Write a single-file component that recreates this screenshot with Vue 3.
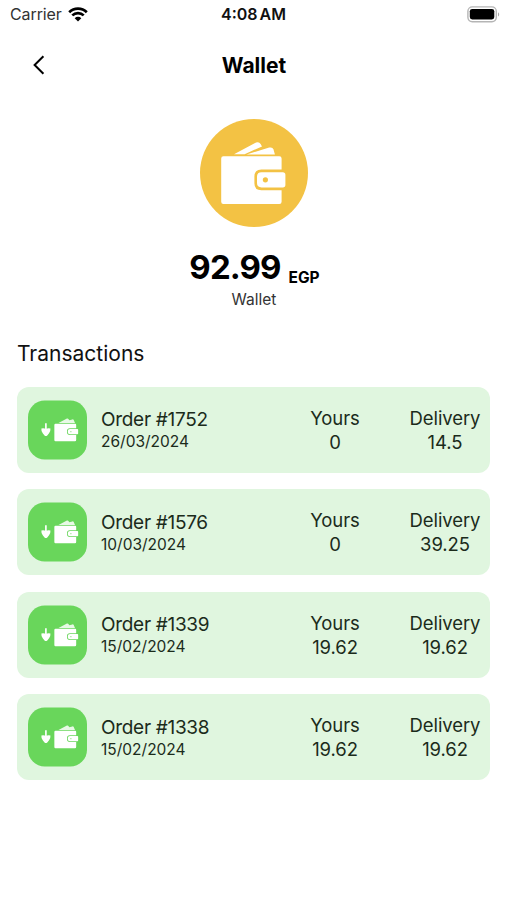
<script setup>
import { ref } from 'vue'

const balance = ref('92.99')
const currency = ref('EGP')

const transactions = ref([
  { id: 1752, date: '26/03/2024', yours: '0', delivery: '14.5' },
  { id: 1576, date: '10/03/2024', yours: '0', delivery: '39.25' },
  { id: 1339, date: '15/02/2024', yours: '19.62', delivery: '19.62' },
  { id: 1338, date: '15/02/2024', yours: '19.62', delivery: '19.62' },
])
</script>

<template>
  <div class="screen">
    <div class="status-bar">
      <div class="status-left">
        <span>Carrier</span>
        <svg class="wifi" viewBox="0 0 20 15" aria-hidden="true">
          <path d="M1.2 5.2a12.6 12.6 0 0 1 17.6 0" />
          <path d="M4.3 8.4a8.1 8.1 0 0 1 11.4 0" />
          <path class="wifi-dot" d="M10 14.4 6.7 11.2a4.7 4.7 0 0 1 6.6 0Z" />
        </svg>
      </div>
      <span class="status-time">4:08 AM</span>
      <div class="status-right">
        <svg class="battery" viewBox="0 0 33 17" aria-hidden="true">
          <rect x="0.9" y="0.9" width="28.4" height="14.8" rx="4.4" fill="#fff" stroke="#b5b5b5" stroke-width="1.4" />
          <rect x="2.8" y="2.9" width="24.5" height="10.6" rx="2.4" fill="#000" />
          <path d="M31 6.2v4.4c1.6-.7 1.6-3.7 0-4.4Z" fill="#aaa" />
        </svg>
      </div>
    </div>

    <header class="nav">
      <button type="button" class="back" aria-label="Back">
        <svg viewBox="0 0 12 20" aria-hidden="true">
          <path d="M10.4 1.2 1.6 10l8.8 8.8" />
        </svg>
      </button>
      <h1>Wallet</h1>
    </header>

    <section class="balance">
      <svg class="balance-icon" viewBox="0 0 108 108" aria-hidden="true">
        <circle cx="54" cy="54" r="54" fill="#f3c244" />
        <path d="M34 35.2 56 23.6q3-1.4 4.6 1.4l1.4 2.4-17.4 7.8Z" fill="#fff" />
        <path d="M46.5 35.4 69.2 28.6q3.4-.9 4.3 2l1.4 4.8Z" fill="#fff" />
        <path d="M23.4 37.2h56q2.2 0 2.2 2.2v11.2H61.4q-7 0-7 7v6.6q0 7 7 7h20.2v11.6q0 2.2-2.2 2.2h-56q-2.2 0-2.2-2.2V39.4q0-2.2 2.2-2.2Z" fill="#fff" />
        <path d="M61.6 53.2h21.2q2.6 0 2.6 2.6v10q0 2.6-2.6 2.6H61.6q-4.6 0-4.6-4.4v-6.4q0-4.4 4.6-4.4Z" fill="#fff" />
        <circle cx="65.4" cy="60.8" r="2.6" fill="#f3c244" />
      </svg>
      <div class="amount">
        <strong>{{ balance }}</strong>
        <span>{{ currency }}</span>
      </div>
      <p>Wallet</p>
    </section>

    <section class="transactions">
      <h2>Transactions</h2>
      <ul>
        <li v-for="item in transactions" :key="item.id" class="card">
          <svg class="card-icon" viewBox="0 0 60 60" aria-hidden="true">
            <rect width="60" height="60" rx="17" fill="#69d65b" />
            <path d="M18.2 23.2v6" stroke="#fff" stroke-width="1.7" />
            <path d="M13.6 28.4q2.4-.5 4.6.3 2.2-.8 4.6-.3.3 3-1.4 4.8l-1.800 2.400q-1.400 1.200-2.800 0L15 33.200q-1.700-1.800-1.400-4.800Z" fill="#fff" />
            <path d="m31 23 8.600-4.600q1-.4 1.700.6l.8 1.100 3-.9q1-.3 1.400.7l1.300 3.100Z" fill="#fff" opacity=".85" />
            <path d="M28 23.600h20q1 0 1 1v3.600h-6.500q-2.800 0-2.800 2.800v1.400q0 2.800 2.800 2.800H49v5q0 1.200-1.200 1.200H28q-1.200 0-1.200-1.200V24.800q0-1.200 1.200-1.200Z" fill="#fff" />
            <path d="M42.700 29h7.500q.8 0 .8.800v3.800q0 .8-.8.800h-7.500q-2.200 0-2.200-2v-1.400q0-2 2.200-2Z" fill="#fff" />
            <circle cx="43.600" cy="31.700" r=".7" fill="#69d65b" opacity=".7" />
          </svg>
          <div class="order">
            <span class="order-id">Order #{{ item.id }}</span>
            <span class="order-date">{{ item.date }}</span>
          </div>
          <div class="share yours">
            <span>Yours</span>
            <span>{{ item.yours }}</span>
          </div>
          <div class="share delivery">
            <span>Delivery</span>
            <span>{{ item.delivery }}</span>
          </div>
        </li>
      </ul>
    </section>
  </div>
</template>

<style>
body {
  background: #fff;
}
</style>

<style scoped>
.screen {
  min-height: 900px;
  box-sizing: border-box;
  overflow: hidden;
  background: #fff;
  color: #111;
  font-family: Inter, "Liberation Sans", sans-serif;
}

.status-bar {
  display: grid;
  grid-template-columns: 1fr auto 1fr;
  align-items: center;
  height: 28px;
  padding: 0 7px 0 10px;
  font-size: 16px;
  line-height: 20px;
}

.status-left {
  display: flex;
  align-items: center;
  gap: 6px;
  color: #333;
  letter-spacing: -0.1px;
}

.wifi {
  width: 20px;
  height: 15px;
  fill: none;
  stroke: #000;
  stroke-width: 2.7;
}

.wifi .wifi-dot {
  fill: #000;
  stroke: none;
}

.status-time {
  margin-right: 3px;
  color: #111;
  font-weight: 600;
  word-spacing: -2px;
}

.status-right {
  display: flex;
  justify-content: flex-end;
}

.battery {
  width: 33px;
  height: 17px;
}

.nav {
  display: grid;
  grid-template-columns: 60px 1fr 60px;
  align-items: center;
  height: 74px;
}

.back {
  display: flex;
  justify-content: flex-end;
  padding: 0 15px 0 0;
  border: 0;
  background: none;
}

.back svg {
  width: 12px;
  height: 20px;
  fill: none;
  stroke: #000;
  stroke-width: 2;
}

.nav h1 {
  margin: 2px 0 0 1px;
  color: #000;
  font-size: 21px;
  font-weight: 700;
  line-height: 28px;
  text-align: center;
}

.balance {
  display: flex;
  flex-direction: column;
  align-items: center;
  padding-top: 17px;
}

.balance-icon {
  width: 108px;
  height: 108px;
}

.amount {
  display: flex;
  align-items: flex-end;
  gap: 8px;
  height: 42px;
  margin: 19px 0 0 2px;
  color: #000;
}

.amount strong {
  font-size: 33px;
  font-weight: 700;
  letter-spacing: -0.9px;
  line-height: 42px;
}

.amount span {
  font-size: 15.5px;
  font-weight: 700;
  line-height: 20px;
}

.balance p {
  margin: 2px 0 0 1px;
  color: #333;
  font-size: 15.5px;
  line-height: 20px;
}

.transactions {
  padding: 30px 17px 0;
}

.transactions h2 {
  margin: 0;
  font-size: 21px;
  font-weight: 400;
  line-height: 28px;
}

.transactions ul {
  display: flex;
  flex-direction: column;
  gap: 16.8px;
  margin: 19px 0 0;
  padding: 0;
  list-style: none;
}

.card {
  display: flex;
  align-items: center;
  box-sizing: border-box;
  height: 85.7px;
  padding: 0 10px 0 11px;
  border-radius: 12px;
  background: #e0f6df;
  color: #1b2b1b;
}

.card-icon {
  flex: none;
  width: 59px;
  height: 60px;
}

.order {
  display: flex;
  flex: 1;
  flex-direction: column;
  margin: 1px 0 0 14px;
}

.order-id {
  font-size: 19px;
  letter-spacing: -0.3px;
  line-height: 23px;
}

.order-date {
  font-size: 15.5px;
  line-height: 21px;
}

.share {
  display: flex;
  flex-direction: column;
  align-items: center;
  font-size: 18.5px;
  letter-spacing: -0.1px;
  line-height: 24px;
}

.yours {
  width: 50px;
  margin-right: 50px;
}

.delivery {
  width: 70px;
}
</style>
